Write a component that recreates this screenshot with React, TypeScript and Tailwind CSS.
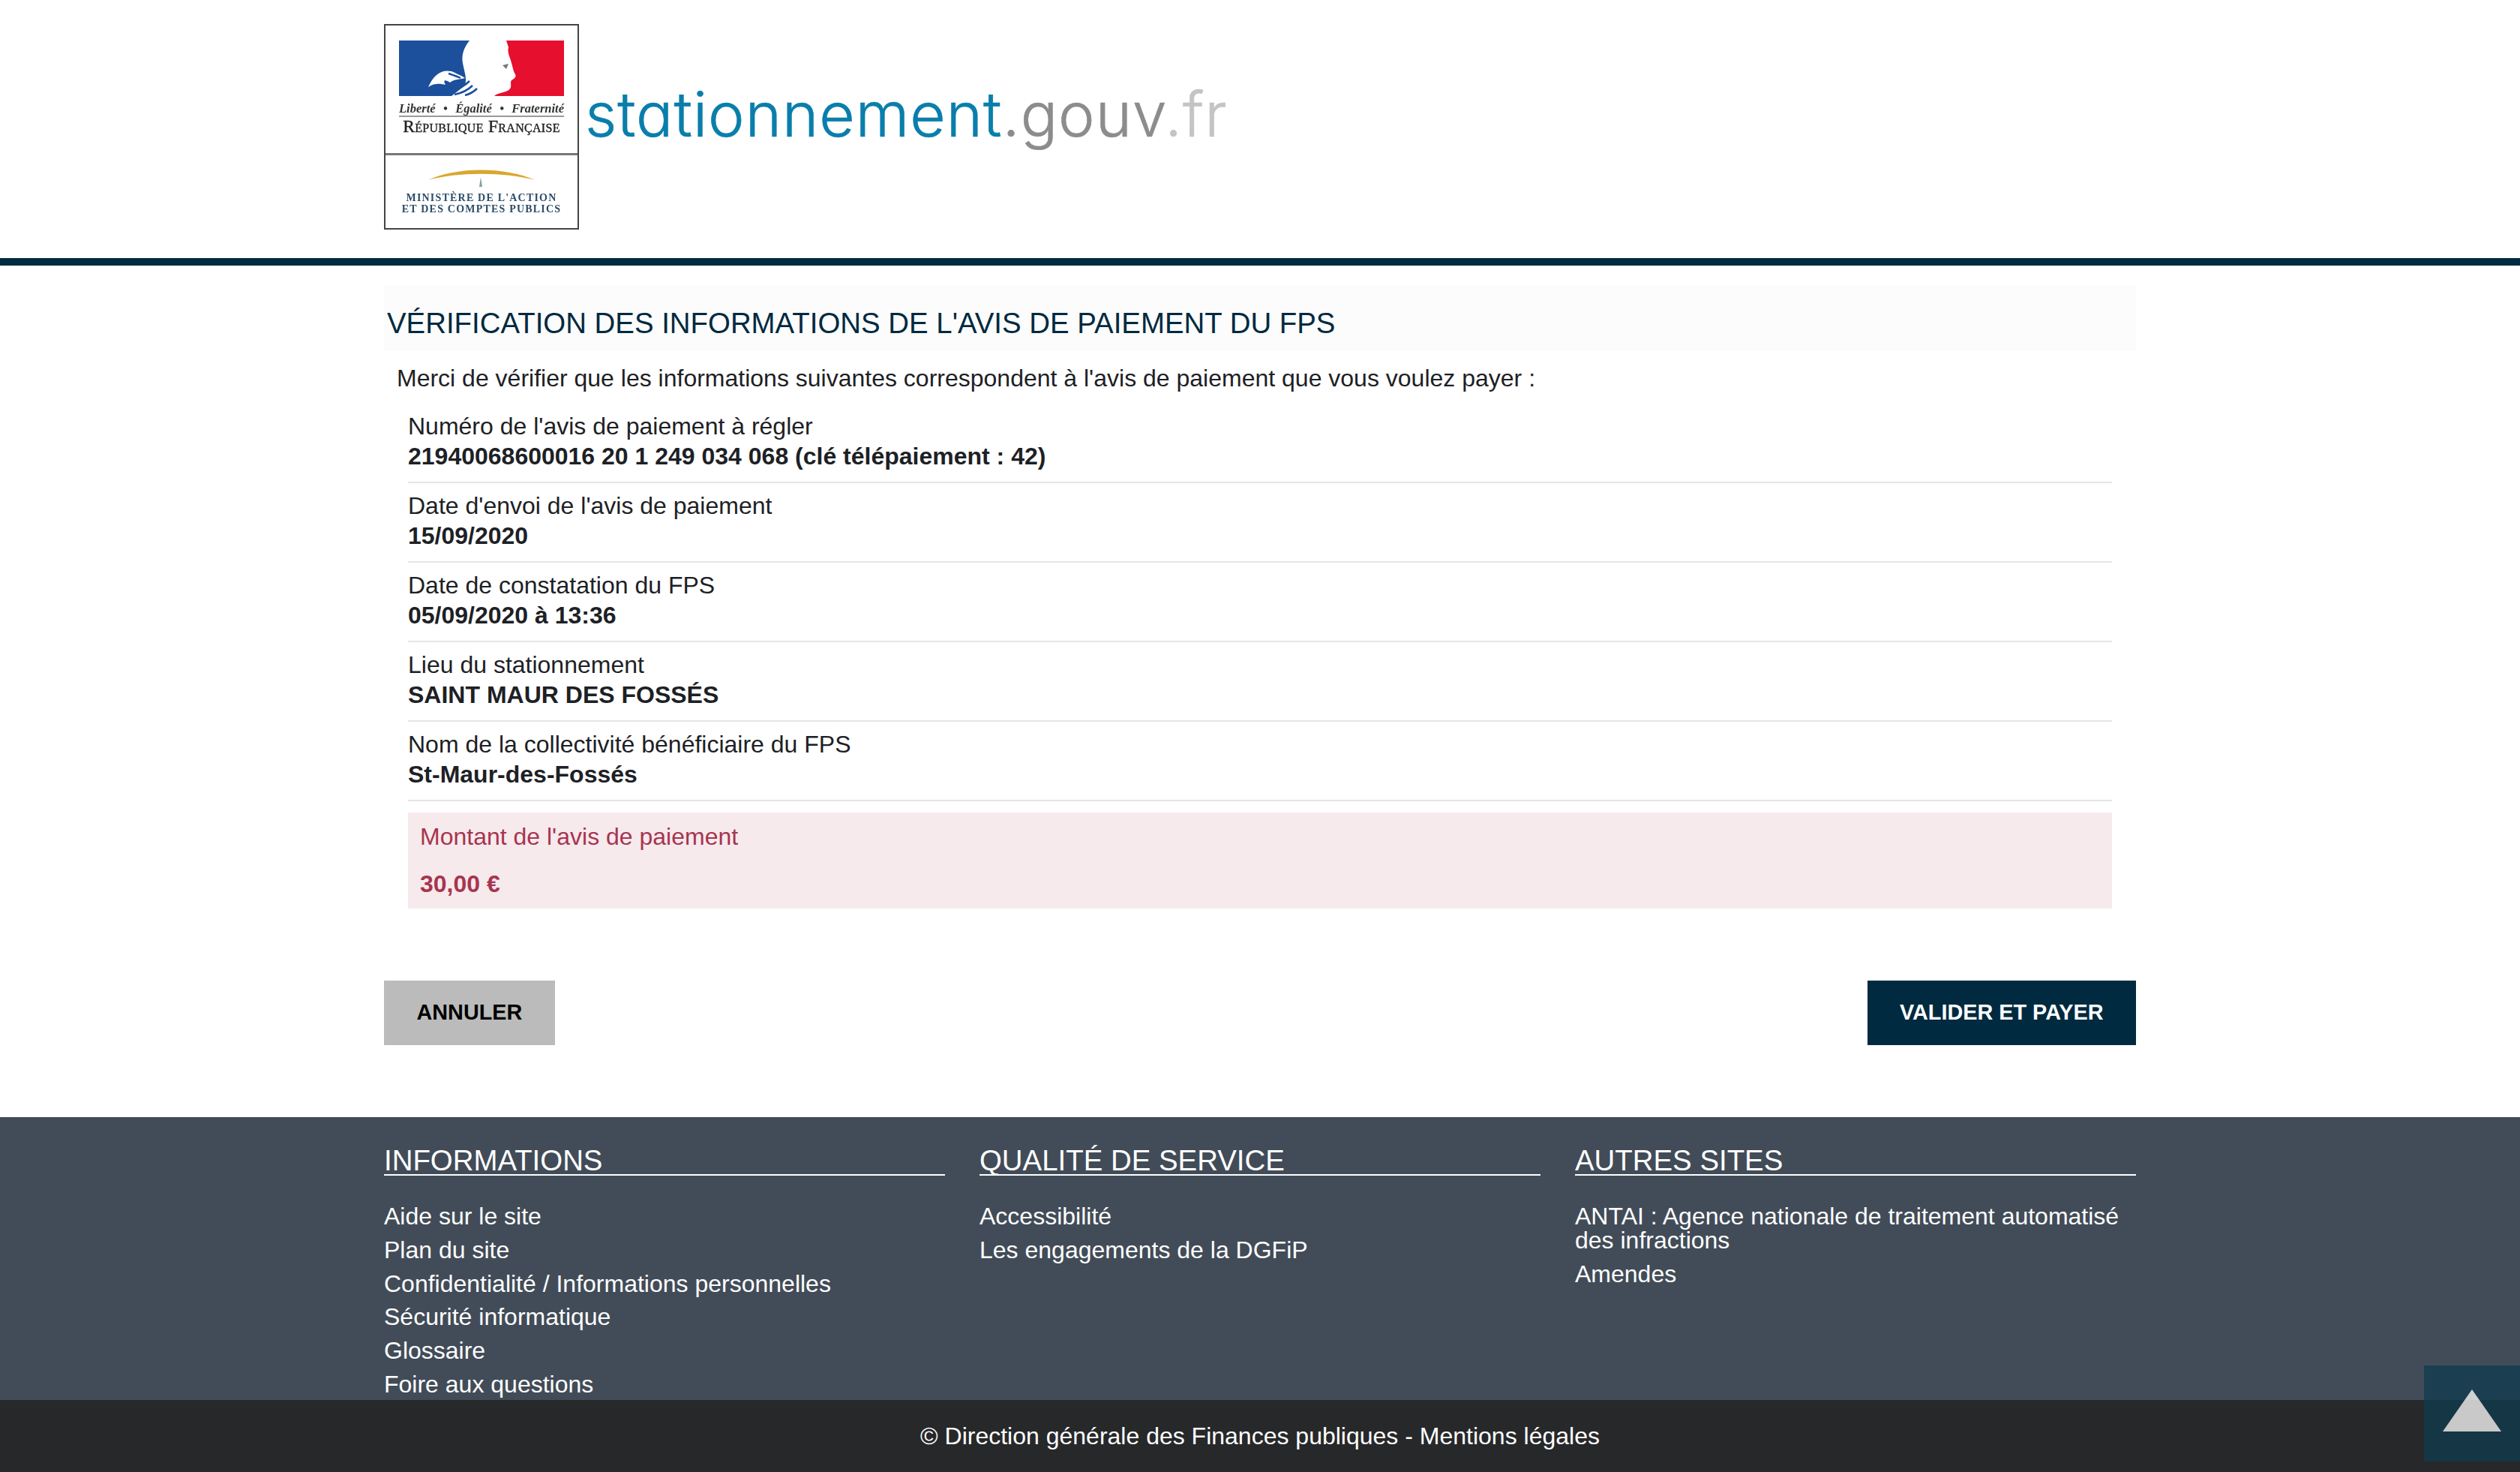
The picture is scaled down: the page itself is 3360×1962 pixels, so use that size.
const rows = [
  { label: "Numéro de l'avis de paiement à régler", value: '21940068600016 20 1 249 034 068 (clé télépaiement : 42)' },
  { label: "Date d'envoi de l'avis de paiement", value: '15/09/2020' },
  { label: 'Date de constatation du FPS', value: '05/09/2020 à 13:36' },
  { label: 'Lieu du stationnement', value: 'SAINT MAUR DES FOSSÉS' },
  { label: 'Nom de la collectivité bénéficiaire du FPS', value: 'St-Maur-des-Fossés' },
]

const footerCols = [
  {
    title: 'INFORMATIONS',
    links: [
      'Aide sur le site',
      'Plan du site',
      'Confidentialité / Informations personnelles',
      'Sécurité informatique',
      'Glossaire',
      'Foire aux questions',
    ],
  },
  { title: 'QUALITÉ DE SERVICE', links: ['Accessibilité', 'Les engagements de la DGFiP'] },
  {
    title: 'AUTRES SITES',
    links: ['ANTAI : Agence nationale de traitement automatisé des infractions', 'Amendes'],
  },
]

function Logo() {
  return (
    <div className="flex h-[274px] w-[260px] shrink-0 flex-col border-2 border-[#444444] bg-white font-['Liberation_Serif',serif]">
      <div className="flex h-[173px] flex-col items-center border-b-[3px] border-[#777777] pt-[20px]">
        <svg width="220" height="74" viewBox="0 0 220 74">
          <rect width="110" height="74" fill="#1c4f9c" />
          <rect x="110" width="110" height="74" fill="#e60f2d" />
          <path
            d="M94 0 C86 10 83 20 85 30 C87 42 91 50 88 60 L70 74 L127 74 C134 68 147 70 149 62 C150 58 148 56 150 53 C153 51 157 49 155 45 C152 40 152 36 150 30 C148 22 144 16 146 9 L143 0 Z"
            fill="#ffffff"
          />
          <path d="M39 62 C46 46 56 38 70 41 C76 44 82 46 88 50 C80 52 72 52 68 56 C62 52 58 52 62 59 C56 58 48 56 39 62 Z" fill="#ffffff" />
          <path d="M66 44 C72 46 78 48 82 50 M66 62 C76 66 86 62 94 54 M74 72 C84 70 92 66 98 60 M88 73 C96 71 100 68 104 64" stroke="#1c4f9c" strokeWidth="2.5" fill="none" />
          <path d="M138 33 L146 31 L143 38 Z" fill="#777777" />
        </svg>
        <div className="mt-[8px] flex w-[220px] justify-between text-[16.5px] leading-[18px] font-bold whitespace-nowrap text-[#333333] italic blur-[0.3px]">
          <span>Liberté</span>
          <span>•</span>
          <span>Égalité</span>
          <span>•</span>
          <span>Fraternité</span>
        </div>
        <div className="h-[2px] w-[220px] bg-[#9a9a9a]" />
        <div className="mt-[1px] w-[224px] text-center text-[23.5px] leading-[22px] tracking-[0.3px] whitespace-nowrap text-[#222222] blur-[0.3px] [-webkit-text-stroke:0.4px_#222222] [font-variant:small-caps]">
          République Française
        </div>
      </div>
      <div className="flex flex-1 flex-col items-center pt-[18px]">
        <svg width="146" height="26" viewBox="0 0 146 26">
          <path d="M2 15 C40 -3 104 -3 144 15 C104 4 40 4 2 15 Z" fill="#d9a72f" />
          <path d="M70 24 L72 11 L74 24 Z" fill="#7fa3a8" />
        </svg>
        <div className="mt-[5px] text-center text-[14px] leading-[15px] font-bold tracking-[1.2px] whitespace-nowrap text-[#2c4c68] blur-[0.3px]">
          MINISTÈRE DE L'ACTION
          <br />
          ET DES COMPTES PUBLICS
        </div>
      </div>
    </div>
  )
}

export default function App() {
  return (
    <div className="relative flex h-[1962px] flex-col overflow-hidden bg-white font-['Liberation_Sans',Arial,sans-serif] text-[32px] text-[#1d2125]">
      <header className="h-[354px] shrink-0 border-b-[10px] border-[#002a3f] pl-[512px] pt-[32px]">
        <div className="flex items-start">
          <Logo />
          <div className="mt-[71px] ml-[8px] font-['Inter',sans-serif] text-[82px] leading-[100px] font-light tracking-[1px] whitespace-nowrap [font-feature-settings:'cv11'] [-webkit-text-stroke:0.6px]">
            <span className="text-[#0a7eab]">stationnement</span>
            <span className="text-[#8c8c8c]">.gouv</span>
            <span className="text-[#c4c4c4]">.fr</span>
          </div>
        </div>
      </header>

      <main className="mx-[512px] shrink-0 pt-[27px]">
        <h1 className="h-[87px] bg-[#fcfcfc] pl-[4px] pt-[27px] text-[38.4px] leading-[46px] text-[#002a3f]">
          VÉRIFICATION DES INFORMATIONS DE L'AVIS DE PAIEMENT DU FPS
        </h1>
        <p className="pl-[17px] pt-[16px] leading-[40px]">
          Merci de vérifier que les informations suivantes correspondent à l'avis de paiement que vous voulez payer :
        </p>
        <div className="mx-[32px] pt-[14px]">
          {rows.map((r) => (
            <div key={r.label} className="border-b-2 border-[#e5e5e5] pb-[14px] pt-[10px] leading-[40px]">
              <div>{r.label}</div>
              <div className="font-bold">{r.value}</div>
            </div>
          ))}
          <div className="mt-[15px] h-[128px] bg-[#f6eaed] pl-[16px] pt-[12px] leading-[40px] text-[#a8344f]">
            <div>Montant de l'avis de paiement</div>
            <div className="mt-[23px] font-bold">30,00 €</div>
          </div>
        </div>
        <div className="mt-[96px] flex justify-between text-[28.8px] font-bold">
          <button className="h-[86px] bg-[#bbbbbb] px-[43.5px] text-black">ANNULER</button>
          <button className="h-[86px] bg-[#002a3f] px-[43.5px] text-white">VALIDER ET PAYER</button>
        </div>
      </main>

      <footer className="mt-[96px] flex min-h-0 flex-1 flex-col">
        <div className="min-h-0 flex-1 overflow-hidden bg-[#424c58] px-[512px] pt-[32px] text-white">
          <div className="grid grid-cols-3 gap-[46px]">
            {footerCols.map((col) => (
              <div key={col.title}>
                <h2 className="h-[46px] border-b-2 border-white pt-[4px] text-[38.4px] leading-[44px]">{col.title}</h2>
                <ul className="pt-[38px]">
                  {col.links.map((l) => (
                    <li key={l} className="mb-[12.8px] leading-[32px]">
                      {l}
                    </li>
                  ))}
                </ul>
              </div>
            ))}
          </div>
        </div>
        <div className="flex h-[96px] shrink-0 items-center justify-center bg-[#27282a] text-white">
          © Direction générale des Finances publiques - Mentions légales
        </div>
      </footer>

      <button className="absolute right-0 top-[1820px] flex h-[128px] w-[128px] justify-center bg-[#0e3b4f] pt-[32px] opacity-75">
        <svg width="78" height="56" viewBox="0 0 78 56">
          <path d="M39 0 L78 56 L0 56 Z" fill="#ffffff" />
        </svg>
      </button>
    </div>
  )
}
